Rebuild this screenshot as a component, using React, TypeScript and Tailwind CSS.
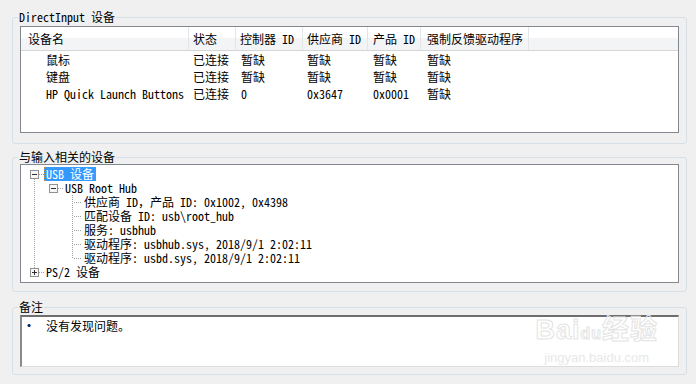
import React from 'react';

const FONT = '[font-family:"Noto_Sans_Mono_CJK_SC","Liberation_Mono","Noto_Sans_CJK_SC",monospace]';

// column widths and left paddings of the DirectInput list
const cols = [
  { w: 'w-[168px]', h: 'pl-[7px]', r: 'pl-[25px]' },
  { w: 'w-[47px]', h: 'pl-[4px]', r: 'pl-[4px]' },
  { w: 'w-[67px]', h: 'pl-[4px]', r: 'pl-[5px]' },
  { w: 'w-[65px]', h: 'pl-[4px]', r: 'pl-[4px]' },
  { w: 'w-[53px]', h: 'pl-[5px]', r: 'pl-[5px]' },
  { w: 'w-[108px]', h: 'pl-[6px]', r: 'pl-[6px]' },
];

const header = ['设备名', '状态', '控制器 ID', '供应商 ID', '产品 ID', '强制反馈驱动程序'];

const rows = [
  ['鼠标', '已连接', '暂缺', '暂缺', '暂缺', '暂缺'],
  ['键盘', '已连接', '暂缺', '暂缺', '暂缺', '暂缺'],
  ['HP Quick Launch Buttons', '已连接', '0', '0x3647', '0x0001', '暂缺'],
];

const Group = ({ label, className = '', legendFont = '', children }: { label: string; className?: string; legendFont?: string; children: React.ReactNode }) => (
  <fieldset className={`border border-[#d5dfe5] rounded-[3px] px-[7px] ${className}`}>
    <legend className={`ml-[-2px] px-[1px] leading-[14px] h-[14px] ${legendFont}`}>{label}</legend>
    {children}
  </fieldset>
);

const DOT = { stroke: '#a0a0a0', strokeDasharray: '1 1', shapeRendering: 'crispEdges' as const };

// expand / collapse box, 9x9
const Box = ({ x, open }: { x: number; open: boolean }) => (
  <g shapeRendering="crispEdges">
    <rect x={x + 0.5} y={3.5} width={8} height={8} fill="#f7f7f7" stroke="#919191" />
    <path d={`M${x + 2} 7.5h5`} stroke="#303030" />
    {!open && <path d={`M${x + 4.5} 5v5`} stroke="#303030" />}
  </g>
);

const TreeRow = ({ width, children, label, selected }: { width: number; children: React.ReactNode; label: string; selected?: boolean }) => (
  <div className="flex h-[14px] items-center">
    <svg width={width} height={14} className="shrink-0">{children}</svg>
    {selected ? (
      <span className="h-[14px] px-[1px] leading-[12px] bg-[#3399ff] text-white border border-dotted border-[#c8842c] whitespace-pre">{label}</span>
    ) : (
      <span className="px-[2px] leading-[14px] whitespace-pre">{label}</span>
    )}
  </div>
);

const leaves = [
  '供应商 ID，产品 ID: 0x1002, 0x4398',
  '匹配设备 ID: usb\\root_hub',
  '服务: usbhub',
  '驱动程序: usbhub.sys, 2018/9/1 2:02:11',
  '驱动程序: usbd.sys, 2018/9/1 2:02:11',
];

export default function App() {
  return (
    <div className={`w-[696px] h-[384px] overflow-hidden bg-[#f0f0f0] pt-[10px] pl-[12px] pr-[9px] text-[12px] leading-[14px] text-black ${FONT}`}>
      <Group label="DirectInput 设备" className="pt-[2px] pb-[10px]">
        <div className="h-[107px] border border-[#828790] bg-white">
          <div className="flex h-[24px] border-b border-[#d5d5d5] bg-[linear-gradient(#ffffff_0%,#ffffff_45%,#f3f4f6_50%,#f3f4f6_100%)]">
            {header.map((h, i) => (
              <div key={i} className={`${cols[i].w} ${cols[i].h} shrink-0 flex items-center border-r border-[#e3e5e8] whitespace-pre`}>{h}</div>
            ))}
            <div className="flex-1" />
          </div>
          {rows.map((r, ri) => (
            <div key={ri} className="flex h-[17px] items-center">
              {r.map((c, i) => (
                <div key={i} className={`${cols[i].w} ${cols[i].r} shrink-0 whitespace-pre`}>{c}</div>
              ))}
            </div>
          ))}
        </div>
      </Group>

      <Group label="与输入相关的设备" className="mt-[6px] pb-[8px]" legendFont='[font-family:"Noto_Sans_CJK_SC",sans-serif]'>
        <div className="h-[119px] border border-[#828790] bg-white pt-[2px]">
          <TreeRow width={23} label="USB 设备" selected>
            <Box x={9} open />
            <path d="M13.5 12v2" {...DOT} />
            <path d="M18 7.5h5" {...DOT} />
          </TreeRow>
          <TreeRow width={42} label="USB Root Hub">
            <path d="M13.5 0v14" {...DOT} />
            <Box x={28} open />
            <path d="M37 7.5h5" {...DOT} />
          </TreeRow>
          {leaves.map((l, i) => (
            <TreeRow key={i} width={61} label={l}>
              <path d="M13.5 0v14" {...DOT} />
              <path d={i === leaves.length - 1 ? 'M51.5 0v8' : 'M51.5 0v14'} {...DOT} />
              <path d="M53 7.5h8" {...DOT} />
            </TreeRow>
          ))}
          <TreeRow width={23} label="PS/2 设备">
            <path d="M13.5 0v3" {...DOT} />
            <Box x={9} open={false} />
            <path d="M18 7.5h5" {...DOT} />
          </TreeRow>
        </div>
      </Group>

      <Group label="备注" className="mt-[8px] pt-[1px] pb-[7px]">
        <div className="relative h-[52px] bg-white border-t-2 border-l-2 border-r border-b border-t-[#6e6e6e] border-l-[#8a8a8a] border-r-[#dcdcdc] border-b-[#dcdcdc] pt-[2px]">
          <div className="flex h-[14px] items-center">
            <span className="w-[24px] pl-[1px] font-bold text-[#10205a]">•</span>
            <span>没有发现问题。</span>
          </div>
          <div className="absolute right-[20px] top-[-4px] flex flex-col items-center text-transparent [-webkit-text-stroke:1px_#e4e4e4] [font-family:'Liberation_Sans','Noto_Sans_CJK_SC',sans-serif]">
            <span className="text-[27px] leading-[34px] font-bold tracking-[1px]">Bai<span className="text-[16px]">du</span>经验</span>
            <span className="text-[13px] leading-[14px] text-[#e8e8e8] [-webkit-text-stroke:0]">jingyan.baidu.com</span>
          </div>
        </div>
      </Group>
    </div>
  );
}
